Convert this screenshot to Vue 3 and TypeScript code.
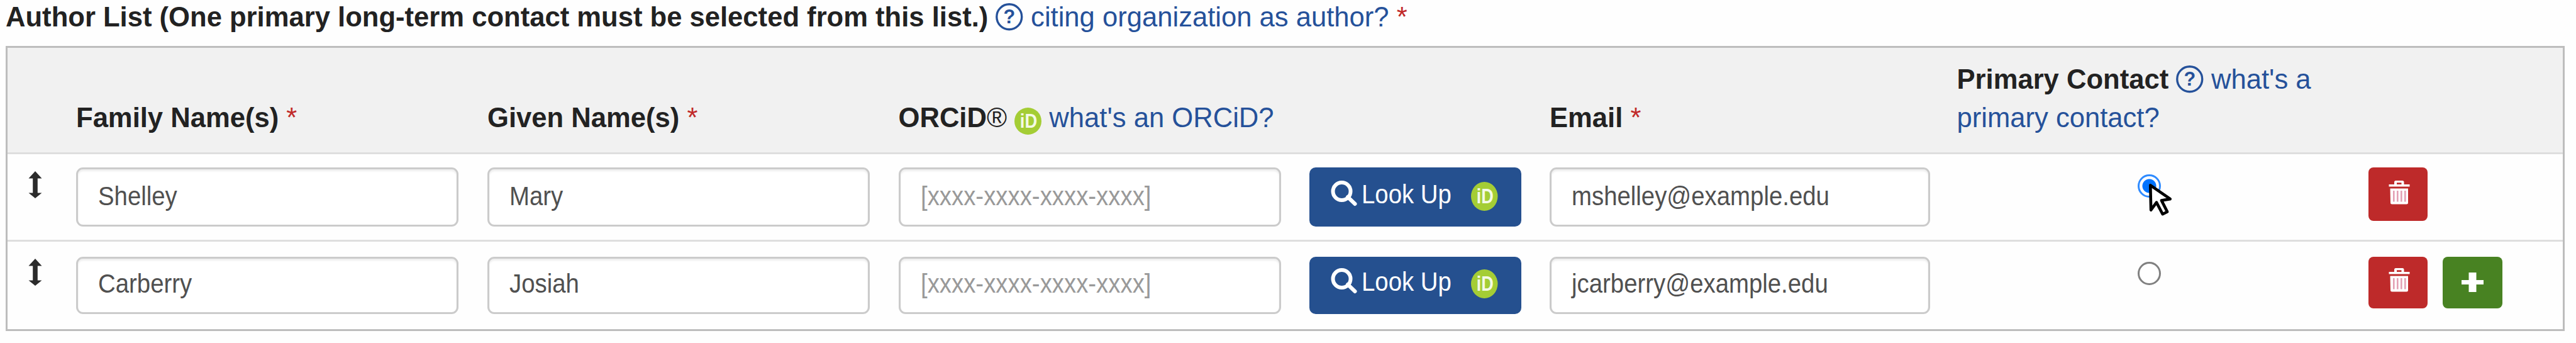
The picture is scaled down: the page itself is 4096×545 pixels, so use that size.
<script setup lang="ts">
import { ref } from 'vue'

interface Author {
  family: string
  given: string
  orcid: string
  email: string
}

const authors = ref<Author[]>([
  { family: 'Shelley', given: 'Mary', orcid: '', email: 'mshelley@example.edu' },
  { family: 'Carberry', given: 'Josiah', orcid: '', email: 'jcarberry@example.edu' },
])
const primary = ref(0)
</script>

<template>
  <main class="page">
    <div class="title">
      <b>Author List (One primary long-term contact must be selected from this list.)</b>
      {{ ' ' }}<svg class="help" viewBox="0 0 44 44"><circle cx="22" cy="22" r="20.2" /><text x="22" y="32" text-anchor="middle">?</text></svg>{{ ' ' }}
      <a>citing organization as author?</a> <span class="req">*</span>
    </div>

    <section class="table">
      <div class="grid head">
        <div></div>
        <div><b>Family Name(s)</b> <span class="req">*</span></div>
        <div><b>Given Name(s)</b> <span class="req">*</span></div>
        <div>
          <b>ORCiD<span class="reg">®</span></b>
          {{ ' ' }}<svg class="orcid" viewBox="0 0 44 44"><circle cx="22" cy="22" r="22" /><text x="9" y="33" textLength="28" lengthAdjust="spacingAndGlyphs">iD</text></svg>{{ ' ' }}
          <a>what's an ORCiD?</a>
        </div>
        <div></div>
        <div><b>Email</b> <span class="req">*</span></div>
        <div class="contact">
          <b>Primary Contact</b>
          {{ ' ' }}<svg class="help" viewBox="0 0 44 44"><circle cx="22" cy="22" r="20.2" /><text x="22" y="32" text-anchor="middle">?</text></svg>{{ ' ' }}
          <a>what's a<br />primary contact?</a>
        </div>
        <div></div>
      </div>

      <div v-for="(a, i) in authors" :key="a.email" class="grid row">
        <svg class="drag" viewBox="0 0 22 43"><path d="M11 0 21.500 11.500H14.800V34.500H21.500L11 43 .5 34.500H7.200V11.500H.5Z" /></svg>
        <div class="field"><span class="narrow">{{ a.family }}</span></div>
        <div class="field"><span class="narrow">{{ a.given }}</span></div>
        <div class="field"><span class="narrow" :class="{ hint: !a.orcid }">{{ a.orcid || '[xxxx-xxxx-xxxx-xxxx]' }}</span></div>
        <button class="lookup">
          <svg class="lens" viewBox="0 0 42 41"><circle cx="17.5" cy="17" r="14" /><path d="M27 26 38.5 37" /></svg>
          <span class="narrow">Look Up</span>
          <svg class="orcid" viewBox="0 0 44 44" preserveAspectRatio="none"><circle cx="22" cy="22" r="22" /><text x="9" y="33" textLength="28" lengthAdjust="spacingAndGlyphs">iD</text></svg>
        </button>
        <div class="field email"><span class="narrow">{{ a.email }}</span></div>
        <div class="choice">
          <span class="radio" :class="{ on: primary === i }" @click="primary = i"></span>
          <svg v-if="primary === i" class="pointer" viewBox="0 0 41 57">
            <path class="outline" d="M3.5 3.5 37.5 27 22.5 29.5 32.5 49 24.5 53 14 33 4.5 46Z" />
          </svg>
        </div>
        <div class="actions">
          <button class="square remove">
            <svg class="trash" viewBox="0 0 34 38">
              <path fill-rule="evenodd" d="M9 6V2.500Q9 0 11.500 0H22Q24.500 0 24.500 2.500V6H33.500V9.500H.5V6ZM13 3.300V6H20.500V3.300Z" />
              <path d="M2.500 12.500H31V35Q31 37.500 28.500 37.500H5.500Q3 37.500 3 35Z" />
              <path class="slots" d="M8.300 16V33.500M14.300 16V33.500M20.300 16V33.500M26.300 16V33.500" />
            </svg>
          </button>
          <button v-if="i === authors.length - 1" class="square add">
            <svg class="plus" viewBox="0 0 35 31"><path d="M11.500 0H23.500V12H35V19H23.500V31H11.500V19H0V12H11.500Z" /></svg>
          </button>
        </div>
      </div>
    </section>
  </main>
</template>

<style>
body { margin: 0; background: #fefefe; }
</style>

<style scoped>
* { box-sizing: border-box; }
.page {
  width: 4096px;
  height: 545px;
  overflow: hidden;
  background: #fefefe;
  color: #222;
  font: 43.6px/60.5px "Liberation Sans", Arial, sans-serif;
}
.title { height: 73px; padding-left: 9px; line-height: 54.4px; white-space: nowrap; }
a { color: #25519a; }
.req { color: #c12a2a; }
.reg { font-weight: 400; }
.help { width: 43.5px; height: 43.5px; vertical-align: -6px; overflow: visible; }
.help circle { fill: none; stroke: #25519a; stroke-width: 3.4; }
.help text { font: bold 31px "Liberation Sans", Arial, sans-serif; fill: #25519a; }
.orcid { width: 43px; height: 43px; vertical-align: -12.5px; }
.orcid circle { fill: #a4cd35; }
.orcid text { font: bold 32px "Liberation Sans", Arial, sans-serif; fill: #f4fae6; }

.table { width: 4069px; height: 453px; margin-left: 9px; border: 3px solid #bdbdbd; }
.grid { display: grid; grid-template-columns: 109px 654px 653.5px 653.5px 382px 647.5px 654px 1fr; align-items: start; }
.head { height: 169px; padding-bottom: 25px; align-items: end; background: #f1f1f1; border-bottom: 3px solid #dedede; white-space: nowrap; }

.row { height: 139px; border-bottom: 3px solid #dedede; --top: 21px; --shrink: 0px; }
.row:last-child { border-bottom: 0; --top: 24px; --shrink: 3px; }
.drag { width: 22px; height: 43px; margin: 26.500px 0 0 33px; fill: #2b2b2b; }
.field {
  width: 608px;
  height: calc(94px - var(--shrink));
  margin-top: var(--top);
  padding: calc(12px - var(--shrink)) 0 0 32px;
  border: 3px solid #cbcbcb;
  border-radius: 11px;
  background: #fff;
  box-shadow: inset 0 3px 3px rgba(0, 0, 0, .07);
  color: #505050;
}
.email { width: 605px; }
.narrow { display: block; font-size: 43px; line-height: 60px; white-space: nowrap; transform: scaleX(.892); transform-origin: left; }
.hint { color: #999; }
button { margin: 0; border: 0; padding: 0; color: #fff; font: inherit; text-align: left; }
.lookup {
  display: flex;
  align-items: flex-start;
  width: 336.500px;
  height: calc(94px - var(--shrink));
  margin-top: var(--top);
  padding: calc(12px - var(--shrink)) 0 0 34px;
  border-radius: 10px;
  background: #25508f;
}
.lookup .narrow { width: 142px; margin: 0 32px 0 7px; }
.lens { width: 42px; height: 41px; margin-top: 8.500px; fill: none; stroke: #fff; stroke-width: 6; stroke-linecap: round; }
.lookup .orcid { width: 42.500px; height: 46px; margin-top: 11px; }
.choice { position: relative; width: 611px; height: 120px; padding-top: 32px; }
.radio { display: block; width: 37px; height: 37px; margin: 0 auto; border: 3px solid #808080; border-radius: 50%; background: #fff; }
.radio.on { border-color: #2f8bff; background: radial-gradient(circle, #0073ff 10.5px, #fff 11.5px); }
.pointer { position: absolute; left: 304px; top: 46px; width: 38px; height: 53px; overflow: visible; }
.outline { fill: #fff; stroke: #000; stroke-width: 5; stroke-linejoin: round; }
.actions { display: flex; gap: 24px; margin-top: var(--top); }
.square {
  display: flex;
  justify-content: center;
  align-items: flex-start;
  width: 94.500px;
  height: calc(85px - var(--shrink));
  border-radius: 8px;
}
.remove { padding: calc(21px - var(--shrink)) 0 0 5px; background: #be2a2a; }
.add { padding-top: 25px; background: #488222; }
.trash { width: 34px; height: 38px; fill: #fff; }
.slots { fill: none; stroke: #e3a0b4; stroke-width: 2.6; }
.plus { width: 35px; height: 31px; fill: #fff; }
</style>
